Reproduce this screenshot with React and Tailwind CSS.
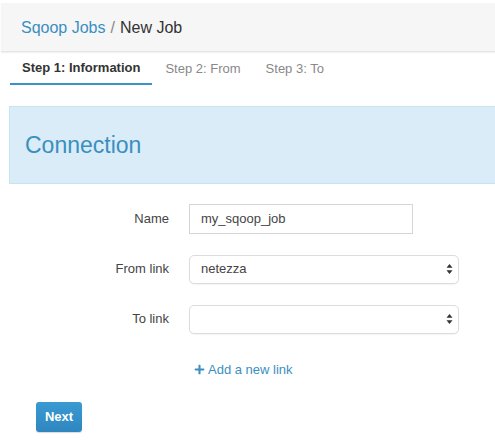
import { FaPlus } from 'react-icons/fa';

const fieldRows = [
  { label: 'Name', kind: 'input', value: 'my_sqoop_job' },
  { label: 'From link', kind: 'select', value: 'netezza' },
  { label: 'To link', kind: 'select', value: '' },
];

const SelectArrows = () => (
  <svg width="7" height="11" viewBox="0 0 7 11" className="absolute right-[5px] top-1/2 -translate-y-1/2">
    <path d="M3.5 0.5 L6.5 4.2 L0.5 4.2 Z" fill="#333" />
    <path d="M3.5 10.5 L6.5 6.8 L0.5 6.8 Z" fill="#333" />
  </svg>
);

const FieldRow = ({ row }) => (
  <div className="flex items-center h-[30px]">
    <label className="w-[169px] text-right text-[13px] text-[#444]">{row.label}</label>
    <div className="ml-[20px]">
      {row.kind === 'input' ? (
        <div className="w-[224px] h-[30px] border border-[#d5d5d5] bg-white flex items-center px-[11px] text-[13px] text-[#444]">
          {row.value}
        </div>
      ) : (
        <div className="relative w-[270px] h-[29px] border border-[#dcdcdc] rounded-[5px] bg-white flex items-center px-[11px] text-[13px] text-[#444] shadow-[0_1px_1px_rgba(0,0,0,0.04)]">
          {row.value}
          <SelectArrows />
        </div>
      )}
    </div>
  </div>
);

export default function App() {
  return (
    <div className="w-[495px] h-[441px] bg-white overflow-hidden font-['Liberation_Sans',Arial,sans-serif]">
      <div className="mt-[3px] ml-[1px] h-[49px] bg-[#f6f6f6] border-b border-[#e6e6e6] shadow-[0_1px_1px_rgba(0,0,0,0.05)] flex items-center pl-[20px] pt-[1px] text-[16px]">
        <span className="text-[#3a8fc2]">Sqoop Jobs</span>
        <span className="text-[#888] mx-[5px]">/</span>
        <span className="text-[#333]">New Job</span>
      </div>

      <div className="flex ml-[10px] h-[33px] items-center text-[13px]">
        <div className="px-3 h-full flex items-center pt-[1px] font-bold text-[#333] border-b-[2px] border-[#3a93c8]">
          Step 1: Information
        </div>
        <div className="ml-[1px] px-3 h-full flex items-center text-[#888]">Step 2: From</div>
        <div className="ml-[1px] px-3 h-full flex items-center text-[#888]">Step 3: To</div>
      </div>

      <div className="mt-[21px] ml-[9px] h-[78px] bg-[#d9ecf7] border border-r-0 border-[#c3e6f3] flex items-center pl-[15px]">
        <h2 className="text-[23px] text-[#3a8fc0]">Connection</h2>
      </div>

      <div className="mt-[20px] flex flex-col gap-[20px]">
        {fieldRows.map((row) => (
          <FieldRow key={row.label} row={row} />
        ))}
      </div>

      <div className="mt-[26px] ml-[194px] flex items-center gap-[3px] text-[13px] text-[#3a8fc0]">
        <FaPlus className="w-[11px] h-[11px]" />
        <span>Add a new link</span>
      </div>

      <button className="mt-[22px] ml-[36px] w-[46px] h-[30px] rounded-[3px] bg-gradient-to-b from-[#3a9ad2] to-[#2f86bf] text-white text-[13px] font-bold shadow-[0_1px_1px_rgba(0,0,0,0.15)]">
        Next
      </button>
    </div>
  );
}
